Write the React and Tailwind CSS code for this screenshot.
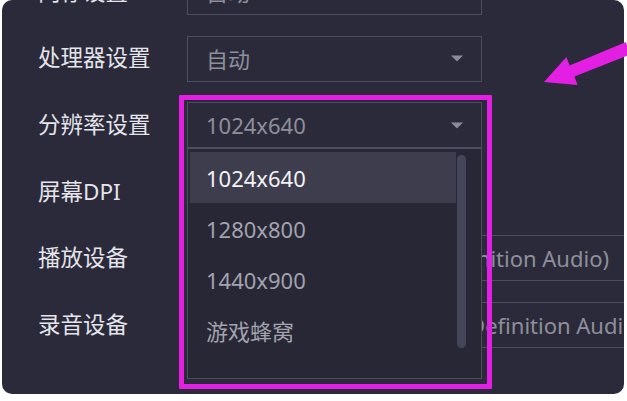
import React from "react";

const Arrow = () => (
  <svg width="12" height="7" viewBox="0 0 12 7" className="shrink-0">
    <path d="M0 0.5 L12 0.5 L6 6.5 Z" fill="#8c8c98" />
  </svg>
);

function Row({ label, value, wide, pad = "pl-[18px]", arrow = true }) {
  return (
    <div className="flex items-center h-[46px] shrink-0">
      <div className="w-[149px] shrink-0 text-[22.5px] leading-none text-[#e4e4ea] whitespace-nowrap">{label}</div>
      <div
        className={
          (wide ? "w-[520px] " : "w-[295px] ") +
          pad +
          " h-[46px] shrink-0 border border-[#4d4d5d] flex items-center justify-between pr-[18px]"
        }
      >
        <span className="text-[22px] leading-none text-[#8f8f9b] whitespace-nowrap">{value}</span>
        {arrow && !wide && <Arrow />}
      </div>
    </div>
  );
}

export default function App() {
  const items = ["1024x640", "1280x800", "1440x900", "游戏蜂窝"];
  return (
    <div
      className="w-[627px] h-[401px] bg-white relative overflow-hidden"
      style={{ fontFamily: '"Noto Sans", "Noto Sans CJK SC", sans-serif' }}
    >
      <div className="ml-[2px] mr-[3px] h-[394px] bg-[#2a2a3a] rounded-[10px] overflow-hidden relative">
        <div className="flex flex-col gap-[20.6px] -mt-[31px] pl-[36px]">
          <Row label="内存设置" value="自动" />
          <Row label="处理器设置" value="自动" />
          <Row label="分辨率设置" value="1024x640" />
          <Row label="屏幕DPI" value="" arrow={false} />
          <Row label="播放设备" value="扬声器 (Realtek High Definition Audio)" wide pad="pl-[32px]" />
          <Row label="录音设备" value="麦克风阵列 (Realtek High Definition Audio)" wide pad="pl-[22px]" />
        </div>

        {/* dropdown menu */}
        <div className="absolute left-[185px] top-[148px] w-[295px] h-[231px] border border-[#4d4d5d] bg-[#272736]">
          <div className="flex flex-col pt-[3px] pl-[2px]">
            {items.map((it, i) => (
              <div
                key={it}
                className={
                  "w-[266px] h-[51px] flex items-center pl-[16px] text-[22px] leading-none whitespace-nowrap " +
                  (i === 0 ? "bg-[#3d3d4d] text-[#f2f2f4]" : "text-[#a3a3ae]")
                }
              >
                {it}
              </div>
            ))}
          </div>
          <div className="absolute left-[269px] top-[6px] w-[9px] h-[193px] rounded-full bg-[#45455a]" />
        </div>
      </div>

      {/* annotation rectangle */}
      <div className="absolute left-[179px] top-[95px] w-[313px] h-[294px] border-[5px] border-[#e41fe4] rounded-[1px]" />

      {/* annotation arrow */}
      <svg className="absolute left-0 top-0 pointer-events-none" width="627" height="401" viewBox="0 0 627 401">
        <polygon
          points="544,82 566.4,57.1 569.6,65.4 626,42 630,54.5 574.4,76.6 577.6,84.9"
          fill="#e41fe4"
        />
      </svg>
    </div>
  );
}
